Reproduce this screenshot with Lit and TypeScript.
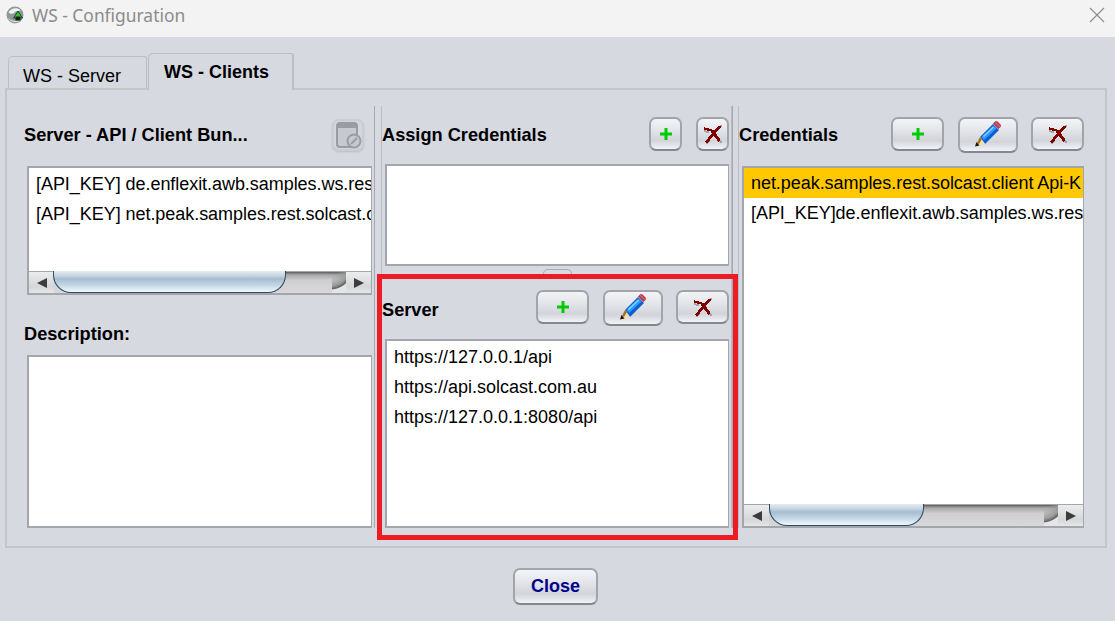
import { LitElement, html, css, svg } from "lit";
import { customElement } from "lit/decorators.js";

const plusIcon = html`<svg width="16" height="16" viewBox="0 0 16 16"><path d="M6.500 2h3v4.500H14v3H9.500V14h-3V9.500H2v-3h4.500z" fill="#00cc00"/></svg>`;

// pixel-ish cross, same bitmap look as the toolbar icon
const removeIcon = html`<svg width="20" height="20" viewBox="0 0 20 20" shape-rendering="crispEdges">
  <path d="M18.500 1l-3 4M14 13l4.500 6M1 7l5 1.500" fill="none" stroke="#a3a3a3" stroke-width="2"/>
  <path d="M6 17l-3 3" fill="none" stroke="#a3a3a3" stroke-width="1.500"/>
  <path d="M1 4.500l6 1.500 5 2" fill="none" stroke="#800000" stroke-width="2.200"/>
  <path d="M17 2L3 18.500" fill="none" stroke="#800000" stroke-width="2.800"/>
  <path d="M9.500 7.500L16.500 17" fill="none" stroke="#800000" stroke-width="3"/>
</svg>`;

const pencilIcon = html`<svg width="32" height="32" viewBox="0 0 32 32">
  <path d="M8 18L21 5l6 6-14 14z" fill="#0a5fd6"/>
  <path d="M9.500 18L21.500 6.500l3 3L12 21z" fill="#2a9cff"/>
  <path d="M11 17L21 7.500l1 1L12 18z" fill="#8fd0ff"/>
  <path d="M21 4.500L23.500 2l2 .5 3 3 .5 2-2.500 2.500z" fill="#dc2a1e"/>
  <path d="M23 3l5 5" stroke="#7c7cd8" stroke-width="1.500"/>
  <path d="M8 18l5 7-9 2.500z" fill="#f4dfb0"/>
  <path d="M8 18l-3 6 2 1 3-5z" fill="#a5701c"/>
  <path d="M4.500 23l3 3.500-4.500 1z" fill="#141414"/>
</svg>`;

const dbIcon = html`<svg width="28" height="30" viewBox="0 0 28 30" opacity=".8">
  <rect x="3" y="3" width="20" height="24" rx="3" fill="#c4c7cd" stroke="#8b8e94" stroke-width="2"/>
  <rect x="3" y="3" width="20" height="5" fill="#8b8e94"/>
  <circle cx="20" cy="21" r="6.500" fill="#c4c7cd" stroke="#8b8e94" stroke-width="2"/>
  <path d="M17 24l6-6" stroke="#8b8e94" stroke-width="2"/>
</svg>`;

const globeIcon = html`<svg width="18" height="18" viewBox="0 0 18 18">
  <circle cx="9" cy="9" r="8.500" fill="#8f9996"/>
  <path d="M2.500 6c3-4 8-5 12-2-2 2-4 0-6 2.500-2 2-5 1.500-6-.5z" fill="#f0f2f0"/>
  <path d="M1.500 12c3 4 9 6 13 2-4 2-9 1-13-2z" fill="#dfe3df"/>
  <path d="M12 5l4.500 7h-9z" fill="#39c02c" stroke="#123" stroke-width=".8"/>
  <rect x="9.500" y="10.500" width="5" height="4" fill="#18230f"/>
</svg>`;

const closeIcon = html`<svg width="16" height="16" viewBox="0 0 16 16"><path d="M1 1l14 14M15 1L1 15" stroke="#8f8f8f" stroke-width="1.200" fill="none"/></svg>`;

const arrow = (dir: "left" | "right") => svg`<svg width="12" height="12" viewBox="0 0 12 12"><path d=${dir === "left" ? "M11 1v10L1 6z" : "M1 1v10l10-5z"} fill="#3c3c3c"/></svg>`;

@customElement("app-root")
export class AppRoot extends LitElement {
  static styles = css`
    :host {
      display: block;
      position: relative;
      width: 1115px;
      height: 621px;
      overflow: hidden;
      background: #d6d9e0;
      font-family: "Liberation Sans", Arial, sans-serif;
      color: #000;
    }
    .titlebar {
      box-sizing: border-box;
      height: 37px;
      background: #f3f3f3;
      display: flex;
      align-items: center;
      padding: 0 10px 7px 6px;
    }
    .titlebar .name {
      font-family: "Noto Sans", sans-serif;
      font-size: 17.400px;
      color: #8b8b8b;
      margin-left: 8px;
      flex: 1;
    }
    .tabs {
      display: flex;
      align-items: flex-end;
      padding: 16px 0 0 8px;
      height: 35px;
      position: relative;
      z-index: 1;
    }
    .tab {
      box-sizing: border-box;
      width: 139px;
      height: 32px;
      border: 1px solid #bcbec3;
      border-bottom: none;
      border-radius: 5px 3px 0 0;
      font-size: 18px;
      padding: 9px 0 0 14px;
    }
    .tab.active {
      width: 146px;
      height: 37px;
      margin: 0 0 -2px 1px;
      background: #d6d9e0;
      border-right-width: 2px;
      font-weight: bold;
      padding: 8px 0 0 15px;
    }
    .panel {
      box-sizing: border-box;
      width: 1102px;
      height: 460px;
      margin-left: 5px;
      border: 2px solid #c4c5c8;
      padding: 16px 0 18px;
      display: flex;
    }
    .col {
      display: flex;
      flex-direction: column;
      padding-top: 11px;
      box-sizing: border-box;
    }
    .col.left {
      width: 367px;
      padding: 11px 2px 0 17px;
    }
    .col.mid {
      width: 351px;
      margin-left: 6px;
      border-left: 1px solid #b9bcc4;
      border-right: 1px solid #b9bcc4;
    }
    .col.right {
      width: 350px;
      margin-left: 5px;
      border-left: 1px solid #b9bcc4;
      padding-right: 4px;
    }
    .rule {
      width: 1px;
      background: #a6a9b2;
    }
    .head {
      height: 35px;
      display: flex;
      align-items: center;
      gap: 13px;
      flex: none;
    }
    .head h2 {
      font-size: 18.200px;
      font-weight: bold;
      margin: 0;
      flex: 1;
      white-space: nowrap;
      line-height: 36px;
    }
    .left .head {
      margin-bottom: 14px;
    }
    .left .head .btn {
      margin-right: 8px;
    }
    .mid .head {
      padding-right: 2px;
      margin-bottom: 12px;
      align-items: flex-start;
    }
    .mid .second {
      margin: 24px 0 14px;
    }
    .mid .second h2 {
      margin-top: 2px;
    }
    .right .head {
      margin-bottom: 14px;
      align-items: flex-start;
    }
    .btn {
      box-sizing: border-box;
      display: flex;
      align-items: center;
      justify-content: center;
      flex: none;
      height: 34px;
      border: 2px solid #a2a4aa;
      border-bottom-color: #85878d;
      border-radius: 7px;
      background: linear-gradient(#f3f4f7 0%, #e4e6ea 35%, #d2d4da 72%, #f1f3f6 100%);
      padding: 0;
    }
    .btn.small { width: 33px; }
    .btn.small + .btn.small { margin-left: 1px; }
    .btn.wide { width: 53px; }
    .btn.edit { width: 60px; height: 36px; margin-left: 1px; }
    .btn.db {
      width: 32px;
      height: 32px;
      border-color: #cacdd3;
      background: #d3d6dc;
      box-shadow: 0 1px 2px #b9bcc3;
    }
    .list {
      box-sizing: border-box;
      background: #fff;
      border: 2px solid #a4a6ae;
      border-width: 2px 1px 2px 2px;
      display: flex;
      flex-direction: column;
      overflow: hidden;
      font-size: 18px;
      white-space: nowrap;
    }
    .left .list { margin-left: 3px; letter-spacing: -0.050px; }
    .mid .list, .right .list { margin: 0 0 0 3px; }
    .mid .list { width: 344px; }
    .right .list { width: 342px; flex: 1; letter-spacing: -0.050px; }
    .rows { flex: 1; padding-top: 1px; overflow: hidden; }
    .right .rows { padding-top: 0; }
    .row {
      height: 30px;
      line-height: 30px;
      padding-left: 7px;
      overflow: hidden;
    }
    .row.selected { background: #ffc800; }
    .scroll {
      flex: none;
      height: 21px;
      display: flex;
      position: relative;
      border-top: 1px solid #a4a6ae;
      background: linear-gradient(#5c5c5c 0%, #a8a8a8 14%, #cfcfd1 40%, #d8d8da 100%);
    }
    .scroll .end {
      width: 25px;
      display: flex;
      align-items: center;
      justify-content: center;
      background: linear-gradient(#eceded, #d5d6d8 70%, #e6e7e8);
      flex: none;
      position: relative;
    }
    .scroll .end.r {
      margin-left: auto;
    }
    .scroll .end.r::before {
      content: "";
      position: absolute;
      left: -14px;
      top: 0;
      width: 14px;
      height: 100%;
      background: radial-gradient(circle at -2px -6px, transparent 0 10px, #9a9a9a 20px, #626262 23px, #e4e5e6 24px);
    }
    .thumb {
      position: absolute;
      top: -1px;
      bottom: 0;
      box-sizing: border-box;
      border: 1px solid #2f4a60;
      border-top: none;
      border-radius: 0 0 18px 18px;
      background: linear-gradient(#e6ecf1 0%, #c6d5e2 22%, #a6bcd0 38%, #c7d9e7 70%, #eefbfe 100%);
    }
    .desc {
      font-size: 18.200px;
      font-weight: bold;
      margin: 29px 0 11px;
      height: 20px;
      line-height: 20px;
    }
    .grip {
      position: absolute;
      left: 543px;
      top: 269px;
      width: 29px;
      height: 8px;
      border: 1px solid #a9acb4;
      border-bottom: none;
      border-radius: 5px 5px 0 0;
      box-sizing: border-box;
    }
    .footer {
      display: flex;
      justify-content: center;
      padding: 20px 4px 0 0;
    }
    .close {
      box-sizing: border-box;
      width: 85px;
      height: 37px;
      border: 2px solid #a2a4aa;
      border-bottom-color: #85878d;
      border-radius: 7px;
      background: linear-gradient(#f3f4f7 0%, #e2e4e9 40%, #d2d4da 72%, #f1f3f6 100%);
      color: #00008b;
      font: bold 18px "Liberation Sans", Arial, sans-serif;
      padding: 0;
    }
    .mark {
      position: absolute;
      left: 377px;
      top: 274px;
      width: 361px;
      height: 266px;
      box-sizing: border-box;
      border: 5px solid #ed1c24;
      pointer-events: none;
    }
  `;

  private scrollbar(left: number, width: number) {
    return html`<div class="scroll">
      <div class="end">${arrow("left")}</div>
      <div class="thumb" style="left:${left}px;width:${width}px"></div>
      <div class="end r">${arrow("right")}</div>
    </div>`;
  }

  private rows(items: string[], selected = -1) {
    return html`<div class="rows">
      ${items.map((t, i) => html`<div class="row ${i === selected ? "selected" : ""}">${t}</div>`)}
    </div>`;
  }

  render() {
    return html`
      <div class="titlebar">
        ${globeIcon}
        <span class="name">WS - Configuration</span>
        ${closeIcon}
      </div>
      <div class="tabs">
        <div class="tab">WS - Server</div>
        <div class="tab active">WS - Clients</div>
      </div>
      <div class="panel">
        <div class="col left">
          <div class="head">
            <h2>Server - API / Client Bun...</h2>
            <div class="btn db">${dbIcon}</div>
          </div>
          <div class="list" style="height:129px">
            ${this.rows(["[API_KEY] de.enflexit.awb.samples.ws.rest", "[API_KEY] net.peak.samples.rest.solcast.cl"])}
            ${this.scrollbar(24, 233)}
          </div>
          <div class="desc">Description:</div>
          <div class="list" style="flex:1"></div>
        </div>
        <div class="rule"></div>
        <div class="col mid">
          <div class="head">
            <h2>Assign Credentials</h2>
            <div class="btn small">${plusIcon}</div>
            <div class="btn small">${removeIcon}</div>
          </div>
          <div class="list" style="height:102px"></div>
          <div class="head second">
            <h2>Server</h2>
            <div class="btn wide">${plusIcon}</div>
            <div class="btn edit">${pencilIcon}</div>
            <div class="btn wide">${removeIcon}</div>
          </div>
          <div class="list" style="flex:1">
            ${this.rows(["https://127.0.0.1/api", "https://api.solcast.com.au", "https://127.0.0.1:8080/api"])}
          </div>
        </div>
        <div class="rule"></div>
        <div class="col right">
          <div class="head">
            <h2>Credentials</h2>
            <div class="btn wide">${plusIcon}</div>
            <div class="btn edit">${pencilIcon}</div>
            <div class="btn wide">${removeIcon}</div>
          </div>
          <div class="list">
            ${this.rows(["net.peak.samples.rest.solcast.client Api-K", "[API_KEY]de.enflexit.awb.samples.ws.rest"], 0)}
            ${this.scrollbar(25, 155)}
          </div>
        </div>
      </div>
      <div class="footer"><button class="close">Close</button></div>
      <div class="grip"></div>
      <div class="mark"></div>
    `;
  }
}
